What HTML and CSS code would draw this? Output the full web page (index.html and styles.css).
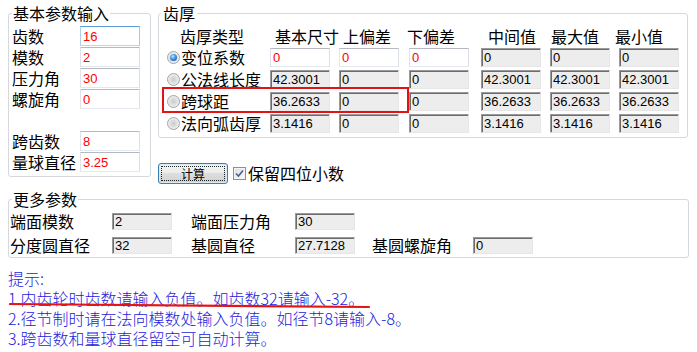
FILE: index.html
```html
<!DOCTYPE html>
<html lang="zh-CN">
<head>
<meta charset="utf-8">
<title>齿厚计算</title>
<link rel="stylesheet" href="styles.css">
</head>
<body>
<div class="page">
  <div class="top">
    <fieldset class="grp basic">
      <legend>基本参数输入</legend>
      <div class="form">
        <label>齿数</label><input class="in edit focus" value="16">
        <label>模数</label><input class="in edit" value="2">
        <label>压力角</label><input class="in edit" value="30">
        <label>螺旋角</label><input class="in edit" value="0">
        <div class="spacer"></div>
        <label>跨齿数</label><input class="in edit" value="8">
        <label>量球直径</label><input class="in edit" value="3.25">
      </div>
    </fieldset>

    <div class="right">
      <fieldset class="grp thick">
        <legend>齿厚</legend>
        <div class="tgrid">
          <div class="th h0">齿厚类型</div>
          <div class="th h1">基本尺寸</div>
          <div class="th h2">上偏差</div>
          <div class="th h3">下偏差</div>
          <div class="th h4">中间值</div>
          <div class="th h5">最大值</div>
          <div class="th h6">最小值</div>

          <div class="opt"><span class="radio on"></span><span>变位系数</span></div>
          <input class="in edit" value="0">
          <input class="in edit" value="0">
          <input class="in edit" value="0">
          <input class="in ro" value="0" readonly>
          <input class="in ro" value="0" readonly>
          <input class="in ro" value="0" readonly>

          <div class="opt"><span class="radio"></span><span>公法线长度</span></div>
          <input class="in ro" value="42.3001" readonly>
          <input class="in ro" value="0" readonly>
          <input class="in ro" value="0" readonly>
          <input class="in ro" value="42.3001" readonly>
          <input class="in ro" value="42.3001" readonly>
          <input class="in ro" value="42.3001" readonly>

          <div class="opt"><span class="radio"></span><span>跨球距</span></div>
          <input class="in ro" value="36.2633" readonly>
          <input class="in ro" value="0" readonly>
          <input class="in ro" value="0" readonly>
          <input class="in ro" value="36.2633" readonly>
          <input class="in ro" value="36.2633" readonly>
          <input class="in ro" value="36.2633" readonly>

          <div class="opt"><span class="radio"></span><span>法向弧齿厚</span></div>
          <input class="in ro" value="3.1416" readonly>
          <input class="in ro" value="0" readonly>
          <input class="in ro" value="0" readonly>
          <input class="in ro" value="3.1416" readonly>
          <input class="in ro" value="3.1416" readonly>
          <input class="in ro" value="3.1416" readonly>

          <div class="redbox"></div>
        </div>
      </fieldset>

      <div class="actions">
        <button class="btn" type="button"><span class="btn-focus">计算</span></button>
        <span class="chk">
          <svg width="9" height="9" viewBox="0 0 9 9"><path d="M1 4.5 L3.5 7 L8 1.5" fill="none" stroke="#4a5f97" stroke-width="1.6"/></svg>
        </span>
        <span class="chk-label">保留四位小数</span>
      </div>
    </div>
  </div>

  <fieldset class="grp more">
    <legend>更多参数</legend>
    <div class="mgrid">
      <label>端面模数</label><input class="in ro sm" value="2" readonly>
      <label>端面压力角</label><input class="in ro sm" value="30" readonly>
      <div></div><div></div>
      <label>分度圆直径</label><input class="in ro sm" value="32" readonly>
      <label>基圆直径</label><input class="in ro sm" value="27.7128" readonly>
      <label>基圆螺旋角</label><input class="in ro sm" value="0" readonly>
    </div>
  </fieldset>

  <div class="tips">
    <div>提示:</div>
    <div>1.内齿轮时齿数请输入负值。如齿数32请输入-32。</div>
    <div>2.径节制时请在法向模数处输入负值。如径节8请输入-8。</div>
    <div>3.跨齿数和量球直径留空可自动计算。</div>
    <svg class="uline" width="362" height="8" viewBox="0 0 362 8"><path d="M1 2 Q180 3.5 360 5" fill="none" stroke="#e41414" stroke-width="2.2" stroke-linecap="round"/></svg>
  </div>
</div>
</body>
</html>
```
FILE: styles.css
```css
* { box-sizing: border-box; }

body {
  margin: 0;
  background: #fff;
  color: #000;
  font-family: "Noto Sans CJK SC", "Noto Sans", sans-serif;
  font-size: 16px;
}

.page {
  width: 697px;
  padding: 4px 0 0 8px;
}

.top {
  display: flex;
  align-items: flex-start;
  gap: 7px;
}

.grp {
  margin: 0;
  min-width: 0;
  border: 1px solid #d5d8dc;
  border-radius: 3px;
}

.grp legend {
  font-size: 16px;
  line-height: 18px;
  padding: 0 1px;
}

/* left group */
.basic {
  padding: 4px 10px 3px 3px;
}

.form {
  display: grid;
  grid-template-columns: 68px 60px;
  grid-auto-rows: 21px;
}

.form label {
  line-height: 21px;
  white-space: nowrap;
}

.form .in {
  height: 20px;
}

.spacer {
  grid-column: 1 / -1;
}

/* inputs */
.in {
  display: block;
  width: 60px;
  margin: 0;
  outline: none;
  font-family: "Liberation Sans", Arial, sans-serif;
  font-size: 13px;
  padding: 0 2px;
}

.edit {
  background: #fff;
  color: #ff0000;
  border: 1px solid;
  border-color: #b5b8be #dbdfe6 #e3e9ef #e2e3ea;
}

.edit.focus {
  border-color: #5b9bd5 #a4c9e3 #b7d9ed #b5cfe7;
}

.ro {
  background: #ededed;
  color: #000;
  border-style: solid;
  border-width: 1px;
  border-color: #9a9a9a #e6e6e6 #e6e6e6 #9a9a9a;
  box-shadow: inset 1px 1px 0 #6c6c6c;
  padding: 0 2px;
}

/* right group */
.right {
  display: flex;
  flex-direction: column;
}

.thick {
  padding: 4px 8px 1px 8px;
}

.thick legend {
  margin-left: -6px;
  padding: 0 2px;
}

.tgrid {
  position: relative;
  display: grid;
  grid-template-columns: 103px 69px 70px 72px 69px 69px 60px;
  grid-template-rows: repeat(5, 22px);
}

.th {
  line-height: 21px;
  white-space: nowrap;
}

.h0 { margin-left: 13px; }
.h1 { margin-left: 5px; }
.h2 { margin-left: 4px; }
.h3 { margin-left: -2px; }
.h4 { margin-left: 7px; }
.h5 { margin-left: 1px; }
.h6 { margin-left: -4px; }

.tgrid .in {
  height: 19px;
}

.opt {
  display: flex;
  align-items: center;
  gap: 1px;
  height: 19px;
  line-height: 19px;
  white-space: nowrap;
}

.radio {
  position: relative;
  flex: none;
  width: 13px;
  height: 13px;
  border-radius: 50%;
  border: 1px solid #a2a4a6;
  background: radial-gradient(circle at 50% 50%, #c9cbcd 0, #dfe0e1 45%, #f4f4f4 80%, #ffffff 100%);
}

.radio.on::after {
  content: "";
  position: absolute;
  left: 2px;
  top: 2px;
  width: 7px;
  height: 7px;
  border-radius: 50%;
  background: radial-gradient(circle at 40% 35%, #bfe6ff 0, #3d94e0 45%, #0b4f9c 100%);
}

.redbox {
  position: absolute;
  left: -5px;
  top: 61px;
  width: 247px;
  height: 26px;
  border: 2px solid #e41212;
}

/* actions */
.actions {
  display: flex;
  align-items: center;
  height: 21px;
  margin-top: 25px;
}

.btn {
  width: 70px;
  height: 21px;
  margin: 0;
  padding: 2px;
  border: 1px solid #3c7fb1;
  border-radius: 3px;
  background: linear-gradient(#f4f4f4 0, #ececec 45%, #dedede 50%, #d0d0d0 100%);
  box-shadow: inset 0 0 0 1px #d6ebf8;
  font-family: "Noto Sans CJK SC", sans-serif;
  font-size: 12px;
  color: #000;
}

.btn-focus {
  display: block;
  height: 15px;
  line-height: 14px;
  border: 1px dotted #222;
}

.chk {
  display: flex;
  align-items: center;
  justify-content: center;
  width: 13px;
  height: 13px;
  margin-left: 5px;
  border: 1px solid #8e8f8f;
  background: linear-gradient(135deg, #dcdcdc, #fbfbfb);
  box-shadow: inset 0 0 0 1px #f4f4f4;
}

.chk-label {
  margin-left: 2px;
  line-height: 21px;
}

/* more params */
.more {
  margin-top: 6px;
  width: 681px;
  padding: 1px 0 0 1px;
}

.more legend {
  margin-left: 2px;
}

.mgrid {
  display: grid;
  grid-template-columns: 102px 79px 104px 77px 101px 60px;
  grid-auto-rows: 24px;
  align-items: center;
}

.mgrid label {
  line-height: 24px;
  white-space: nowrap;
}

.mgrid .in {
  height: 17px;
  font-size: 13px;
}

/* tips */
.tips {
  position: relative;
  margin-top: 10px;
  color: #1c1cdc;
  font-weight: 300;
  line-height: 20px;
}

.uline {
  position: absolute;
  left: 1px;
  top: 34px;
}
```
